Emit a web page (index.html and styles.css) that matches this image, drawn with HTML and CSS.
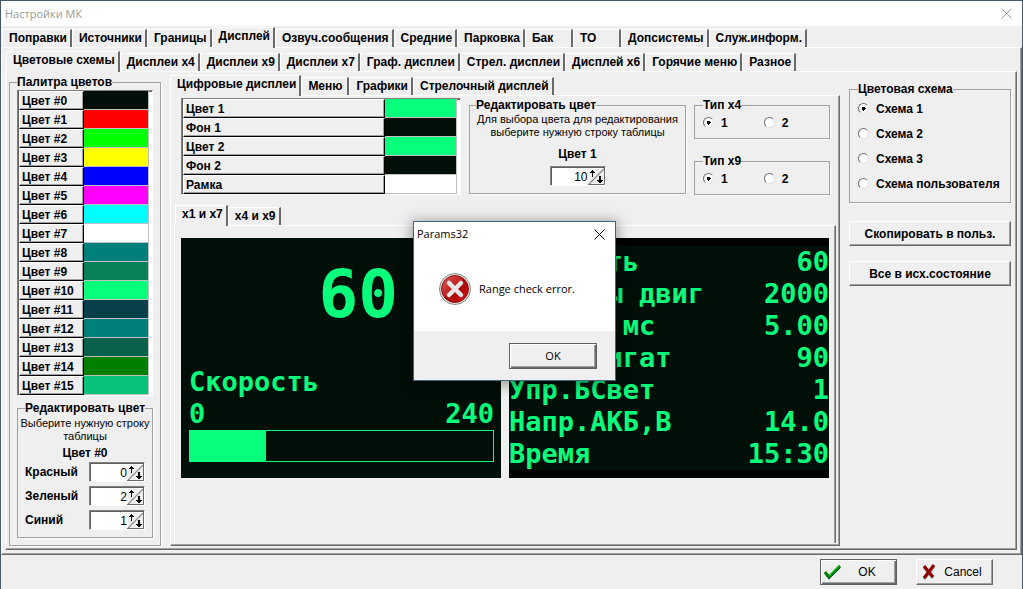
FILE: index.html
```html
<!DOCTYPE html>
<html lang="ru">
<head>
<meta charset="utf-8">
<title>Настройки МК</title>
<link rel="stylesheet" href="styles.css">
</head>
<body>
<svg class="defs" aria-hidden="true">
  <symbol id="spin-up" viewBox="0 0 17 17"><path d="M0 0H17L0 17Z" fill="#efefef"/><path d="M0.5 17V0.5H17" fill="none" stroke="#fff"/><path d="M4 2h1v1h1v1h1v1H5v4H4V5H2V4h1V3h1z" fill="#000"/></symbol>
  <symbol id="spin-down" viewBox="0 0 17 17"><path d="M0 0H17V17H0Z" fill="#efefef"/><path d="M0 17L17 0" stroke="#909090" stroke-width="1.500"/><path d="M0 16.500H16.500V0" fill="none" stroke="#6a6a6a"/><path d="M11 8h2v4h2v1h-1v1h-1v1h-2v-1h-1v-1H9v-1h2z" fill="#000"/></symbol>
</svg>
<main class="window">
  <header class="titlebar">
    <h1>Настройки МК</h1>
    <button class="close" aria-label="Закрыть"><svg viewBox="0 0 11 11"><path d="M.5.5l10 10M10.5.5l-10 10"/></svg></button>
  </header>

  <section class="level1">
    <nav class="tabs" role="tablist">
      <button role="tab">Поправки</button><button role="tab">Источники</button><button role="tab">Границы</button><button role="tab" class="on" aria-selected="true">Дисплей</button><button role="tab">Озвуч.сообщения</button><button role="tab">Средние</button><button role="tab">Парковка</button><button role="tab">Бак</button><button role="tab">ТО</button><button role="tab">Допсистемы</button><button role="tab">Служ.информ.</button>
    </nav>
    <div class="pane pane1">
      <nav class="tabs" role="tablist">
        <button role="tab" class="on" aria-selected="true">Цветовые схемы</button><button role="tab">Дисплеи x4</button><button role="tab">Дисплеи x9</button><button role="tab">Дисплеи x7</button><button role="tab">Граф. дисплеи</button><button role="tab">Стрел. дисплеи</button><button role="tab">Дисплей x6</button><button role="tab">Горячие меню</button><button role="tab">Разное</button>
      </nav>
      <div class="pane pane2">

        <fieldset class="palette">
          <legend>Палитра цветов</legend>
          <table class="grid">
            <tr><th scope="row">Цвет #0</th><td class="c0"></td></tr>
            <tr><th scope="row">Цвет #1</th><td class="c1"></td></tr>
            <tr><th scope="row">Цвет #2</th><td class="c2"></td></tr>
            <tr><th scope="row">Цвет #3</th><td class="c3"></td></tr>
            <tr><th scope="row">Цвет #4</th><td class="c4"></td></tr>
            <tr><th scope="row">Цвет #5</th><td class="c5"></td></tr>
            <tr><th scope="row">Цвет #6</th><td class="c6"></td></tr>
            <tr><th scope="row">Цвет #7</th><td class="c7"></td></tr>
            <tr><th scope="row">Цвет #8</th><td class="c8"></td></tr>
            <tr><th scope="row">Цвет #9</th><td class="c9"></td></tr>
            <tr><th scope="row">Цвет #10</th><td class="c10"></td></tr>
            <tr><th scope="row">Цвет #11</th><td class="c11"></td></tr>
            <tr><th scope="row">Цвет #12</th><td class="c12"></td></tr>
            <tr><th scope="row">Цвет #13</th><td class="c13"></td></tr>
            <tr><th scope="row">Цвет #14</th><td class="c14"></td></tr>
            <tr><th scope="row">Цвет #15</th><td class="c15"></td></tr>
          </table>
          <fieldset class="rgb">
            <legend>Редактировать цвет</legend>
            <p class="hint">Выберите нужную строку таблицы</p>
            <p class="name">Цвет #0</p>
            <div class="field"><label for="r">Красный</label><span class="spin"><input id="r" type="text" value="0"><button class="down" aria-label="Меньше"><svg><use href="#spin-down"/></svg></button><button class="up" aria-label="Больше"><svg><use href="#spin-up"/></svg></button></span></div>
            <div class="field"><label for="g">Зеленый</label><span class="spin"><input id="g" type="text" value="2"><button class="down" aria-label="Меньше"><svg><use href="#spin-down"/></svg></button><button class="up" aria-label="Больше"><svg><use href="#spin-up"/></svg></button></span></div>
            <div class="field"><label for="b">Синий</label><span class="spin"><input id="b" type="text" value="1"><button class="down" aria-label="Меньше"><svg><use href="#spin-down"/></svg></button><button class="up" aria-label="Больше"><svg><use href="#spin-up"/></svg></button></span></div>
          </fieldset>
        </fieldset>

        <section class="displays">
          <nav class="tabs" role="tablist">
            <button role="tab" class="on" aria-selected="true">Цифровые дисплеи</button><button role="tab">Меню</button><button role="tab">Графики</button><button role="tab">Стрелочный дисплей</button>
          </nav>
          <div class="pane pane3">
            <div class="settings">
              <table class="grid wide">
                <tr><th scope="row">Цвет 1</th><td class="c10"></td></tr>
                <tr><th scope="row">Фон 1</th><td class="c0"></td></tr>
                <tr><th scope="row">Цвет 2</th><td class="c10"></td></tr>
                <tr><th scope="row">Фон 2</th><td class="c0"></td></tr>
                <tr><th scope="row">Рамка</th><td class="c7"></td></tr>
              </table>
              <fieldset class="pick">
                <legend>Редактировать цвет</legend>
                <p class="hint">Для выбора цвета для редактирования выберите нужную строку таблицы</p>
                <label class="name" for="idx">Цвет 1</label>
                <span class="spin"><input id="idx" type="text" value="10"><button class="down" aria-label="Меньше"><svg><use href="#spin-down"/></svg></button><button class="up" aria-label="Больше"><svg><use href="#spin-up"/></svg></button></span>
              </fieldset>
              <div class="types">
                <fieldset><legend>Тип x4</legend><label><input type="radio" name="x4" checked>1</label><label><input type="radio" name="x4">2</label></fieldset>
                <fieldset><legend>Тип x9</legend><label><input type="radio" name="x9" checked>1</label><label><input type="radio" name="x9">2</label></fieldset>
              </div>
            </div>
            <nav class="tabs small" role="tablist">
              <button role="tab" class="on" aria-selected="true">x1 и x7</button><button role="tab">x4 и x9</button>
            </nav>
            <div class="pane pane4">
              <div class="lcd gauge">
                <div class="big">60</div>
                <div class="line"><span>Скорость</span></div>
                <div class="line"><span>0</span><span>240</span></div>
                <div class="bar"><div class="fill"></div></div>
              </div>
              <div class="lcd list">
                <div class="line"><span>Скорость</span><span>60</span></div>
                <div class="line"><span>Обороты двиг</span><span>2000</span></div>
                <div class="line"><span>Впрыск мс</span><span>5.00</span></div>
                <div class="line"><span>Тем.двигат</span><span>90</span></div>
                <div class="line"><span>Упр.БСвет</span><span>1</span></div>
                <div class="line"><span>Напр.АКБ,В</span><span>14.0</span></div>
                <div class="line"><span>Время</span><span>15:30</span></div>
              </div>
            </div>
          </div>
        </section>

        <aside class="side">
          <fieldset class="scheme">
            <legend>Цветовая схема</legend>
            <label><input type="radio" name="scheme" checked>Схема 1</label>
            <label><input type="radio" name="scheme">Схема 2</label>
            <label><input type="radio" name="scheme">Схема 3</label>
            <label><input type="radio" name="scheme">Схема пользователя</label>
          </fieldset>
          <button class="btn">Скопировать в польз.</button>
          <button class="btn">Все в исх.состояние</button>
        </aside>
      </div>
    </div>
  </section>

  <footer class="actions">
    <button class="btn default"><svg viewBox="0 0 17 16"><path d="M1 9l4 5L16 3" fill="none" stroke="#000080" stroke-width="2"/><path d="M1 8l4 5L16 2" fill="none" stroke="#008000" stroke-width="3"/><path d="M5 12L15.500 1.500" fill="none" stroke="#00d000"/></svg><span>OK</span></button>
    <button class="btn"><svg viewBox="0 0 17 16"><path d="M4 3l9 11M14 2L4 15" fill="none" stroke="#909090" stroke-width="3"/><path d="M4 2l9 11M14 1L4 14" fill="none" stroke="#900000" stroke-width="3"/></svg><span>Cancel</span></button>
  </footer>
</main>

<div class="dialog" role="alertdialog" aria-labelledby="dlg-title">
  <header><h2 id="dlg-title">Params32</h2><button class="close" aria-label="Закрыть"><svg viewBox="0 0 11 11"><path d="M.5.5l10 10M10.5.5l-10 10"/></svg></button></header>
  <div class="message">
    <svg viewBox="0 0 32 32">
      <defs><linearGradient id="red" x1="0" y1="0" x2="1" y2="1"><stop offset="0" stop-color="#e06060"/><stop offset=".45" stop-color="#c02020"/><stop offset=".5" stop-color="#a00808"/><stop offset="1" stop-color="#e01010"/></linearGradient></defs>
      <circle cx="16" cy="16" r="15.500" fill="#e8e8e8" stroke="#888"/>
      <circle cx="16" cy="16" r="13.500" fill="url(#red)" stroke="#8c1010"/>
      <path d="M10 10l12 12M22 10L10 22" stroke="#e6e6e6" stroke-width="4.500" stroke-linecap="round"/>
    </svg>
    <p>Range check error.</p>
  </div>
  <footer><button class="btn default">OK</button></footer>
</div>
</body>
</html>
```
FILE: styles.css
```css
* { box-sizing: border-box; }
body {
  margin: 0;
  font: bold 12px/14px "Liberation Sans", Arial, sans-serif;
  color: #000;
  background: #efefef;
}
h1, h2, p { margin: 0; font-weight: normal; }
button, input { font: inherit; color: inherit; }
button { padding: 0; }
.defs { position: absolute; width: 0; height: 0; }

.window {
  display: flex;
  flex-direction: column;
  min-height: 100vh;
  border: 1px solid #47586b;
}
.titlebar {
  display: flex;
  align-items: center;
  justify-content: space-between;
  height: 25px;
  padding: 0 10px 0 4px;
  background: #fff;
  color: #999;
}
.titlebar h1 { font: 11px/16px "Open Sans", sans-serif; }
.close { display: flex; border: 0; background: none; }
.close svg { width: 11px; height: 11px; fill: none; stroke: currentColor; }

/* Tabs */
.tabs {
  display: flex;
  align-items: flex-end;
  height: 20px;
}
.tabs button {
  height: 18px;
  min-width: 48px;
  padding: 0 3px 1px 6px;
  border: 0 solid;
  border-width: 1px 2px 0 1px;
  border-color: #fff #6a6a6a #fff #fff;
  background: #efefef;
  text-align: left;
  white-space: nowrap;
}
.tabs .on {
  height: 21px;
  margin-bottom: -1px;
  padding: 0 3px 4px 6px;
  z-index: 1;
}
.pane {
  border: 1px solid;
  border-color: #fff #6a6a6a #6a6a6a #fff;
  box-shadow: inset -1px -1px #a0a0a0;
}
.level1 {
  display: flex;
  flex-direction: column;
  flex: 1;
  padding: 1px 0 0;
}
.level1 > .tabs { padding-left: 1px; }
.pane1 {
  display: flex;
  flex-direction: column;
  flex: 1;
  padding: 3px 4px 4px 3px;
}
.pane1 > .tabs { padding-left: 1px; }
.pane2 {
  display: flex;
  flex: 1;
  gap: 9px;
  padding: 3px 5px 3px 3px;
}

/* Groups */
fieldset {
  min-width: 0;
  margin: 0;
  padding: 0;
  border: 1px solid #a0a0a0;
  box-shadow: 1px 1px #fff;
}
legend { padding: 0; white-space: nowrap; }
.palette {
  width: 152px;
  padding: 1px 7px 7px;
}
.hint { font-weight: normal; font-size: 11px; line-height: 13px; text-align: center; }
.name { display: block; font-weight: bold; text-align: center; }

.grid {
  width: 136px;
  border-collapse: separate;
  border-spacing: 0;
  border: 1px solid;
  border-color: #808080 #fff #fff #808080;
  box-shadow: inset 1px 1px #606060;
  padding: 0 3px 0 1px;
  background: #fff;
}
.grid th {
  width: 65px;
  height: 19px;
  padding: 0 0 0 2px;
  border: 1px solid;
  border-color: #fff #000 #000 #fff;
  box-shadow: inset -1px -1px #a0a0a0;
  background: #efefef;
  text-align: left;
}
.grid td { padding: 0; border: 1px solid #c0c0c0; border-width: 0 1px 1px 0; }
.grid.wide { width: 280px; }
.grid.wide th { width: 202px; }
.c0 { background: #000f08; }
.c1 { background: #f00; }
.c2 { background: #0f0; }
.c3 { background: #ff0; }
.c4 { background: #00f; }
.c5 { background: #f0f; }
.c6 { background: #0ff; }
.c7 { background: #fff; }
.c8, .c12 { background: #007f7b; }
.c9 { background: #08815a; }
.c10 { background: #08ff7b; }
.c11 { background: #083f4a; }
.c13 { background: #08614a; }
.c14 { background: #008000; }
.c15 { background: #08c27b; }

.rgb { margin-top: 5px; padding: 2px 7px 5px; }
.rgb .hint { margin: 0 -5px; }
.rgb .name { margin: 3px 0 0; }
.field {
  display: flex;
  align-items: center;
  justify-content: space-between;
  height: 24px;
}
.spin {
  display: grid;
  grid-template-columns: 1fr 17px;
  width: 56px;
  height: 20px;
  border: 1px solid;
  border-color: #808080 #fff #fff #808080;
  box-shadow: inset 1px 1px #606060;
  background: #fff;
  padding: 1px 0 0 1px;
}
.spin input {
  min-width: 0;
  padding: 0;
  border: 0;
  background: none;
  font-weight: normal;
  text-align: right;
}
.spin button { grid-area: 1 / 2; border: 0; background: none; }
.spin .up { clip-path: polygon(0 0, 94% 0, 0 94%); }
.spin svg { display: block; width: 17px; height: 17px; }

/* Display editor */
.displays { display: flex; flex-direction: column; flex: 1; min-width: 0; }
.pane3 {
  display: flex;
  flex-direction: column;
  flex: 1;
  padding: 2px 3px 2px;
}
.settings { display: flex; align-items: flex-start; padding-left: 7px; gap: 8px; }
.pick {
  display: flex;
  flex-direction: column;
  align-items: center;
  width: 217px;
  height: 96px;
  padding: 1px 6px;
}
.pick .name { margin: 8px 0 5px; }
.types { display: flex; flex-direction: column; gap: 15px; }
.types fieldset { display: flex; gap: 36px; width: 136px; height: 41px; padding: 4px 0 0 8px; }
label { white-space: nowrap; }
input[type="radio"] {
  appearance: none;
  width: 11px;
  height: 11px;
  margin: 0 7px 0 0;
  border: 1px solid;
  border-color: #707070 #e3e3e3 #e3e3e3 #707070;
  border-radius: 50%;
  background: #fff;
  vertical-align: -1px;
}
input[type="radio"]:checked { background: radial-gradient(circle, #000 2px, #fff 2px); }
.small { margin-top: 10px; padding-left: 1px; }
.pane4 {
  display: flex;
  align-items: flex-start;
  flex: 1;
  gap: 8px;
  padding: 12px 6px;
  border-bottom: 0;
  box-shadow: inset -1px 0 #a0a0a0;
}
.lcd {
  flex: 0 1 320px;
  height: 240px;
  font: bold 27px/32px "DejaVu Sans Mono", monospace;
  color: #08ff7b;
  background: #000f08;
}
.line { display: flex; justify-content: space-between; }
.gauge { padding: 20px 7px 16px 8px; }
.big { padding: 0 96px 0 0; font-size: 66px; line-height: 74px; text-align: right; }
.gauge .big + .line { margin-top: 34px; }
.bar { height: 32px; border: 1px solid #08ff7b; }
.fill { width: 25%; height: 100%; background: #08ff7b; }
.list { border: solid #000; border-width: 8px 0; }

/* Side column */
.side { display: flex; flex-direction: column; width: 162px; padding-top: 7px; }
.scheme { display: flex; flex-direction: column; gap: 11px; height: 121px; padding: 6px 0 0 8px; margin-bottom: 18px; }
.btn {
  height: 25px;
  border: 1px solid;
  border-color: #fff #6a6a6a #6a6a6a #fff;
  box-shadow: inset -1px -1px #a0a0a0;
  background: #efefef;
}
.side .btn { margin-bottom: 15px; }

.actions {
  display: flex;
  justify-content: flex-end;
  gap: 19px;
  padding: 4px 29px;
}
.actions .btn {
  display: flex;
  align-items: center;
  width: 77px;
  height: 26px;
  padding: 0 3px;
  font-weight: normal;
}
.actions svg { width: 17px; height: 16px; }
.actions span { flex: 1; text-align: center; }
.btn.default { border-color: #606060; box-shadow: inset 1px 1px #fff, inset -1px -1px #6a6a6a, inset -2px -2px #a0a0a0; }

/* Message box */
.dialog {
  position: absolute;
  left: 413px;
  top: 221px;
  width: 203px;
  border: 1px solid #3f6382;
  background: #fff;
  box-shadow: 0 2px 12px 2px rgba(0, 0, 0, .35);
  font: 11px/16px "Open Sans", sans-serif;
}
.dialog header { display: flex; justify-content: space-between; align-items: center; height: 24px; padding: 0 10px 0 3px; }
.dialog h2 { font-size: 11px; }
.message { display: flex; align-items: center; gap: 8px; padding: 27px 25px 26px; }
.message svg { width: 32px; height: 32px; }
.message p { white-space: nowrap; }
.dialog footer { display: flex; justify-content: flex-end; padding: 12px 18px 11px; background: #efefef; }
.dialog .btn { width: 88px; height: 26px; }
```
